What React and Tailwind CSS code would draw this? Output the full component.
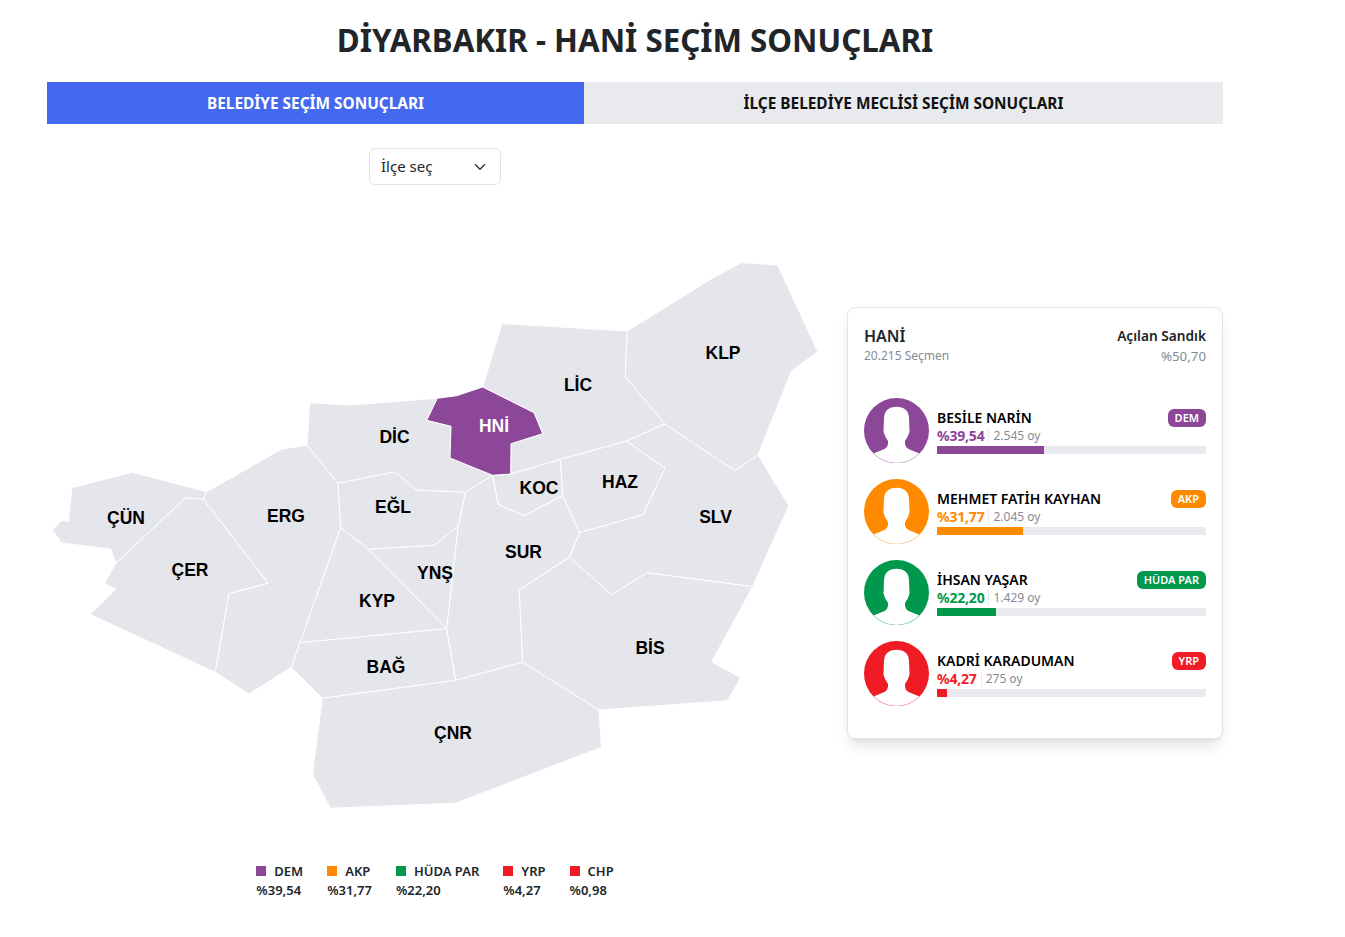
import React from 'react'

const districts = [
  ['ÇÜN', '206.7,491.7 132.3,472.3 72,487.7 68.3,521.7 62,520.3 52.3,530 61.7,543 110.7,549 116,563.3 185.3,498 203.3,499.3'],
  ['ÇER', '116,563.3 104.5,583.3 116,589.3 90,614.3 215.3,672.3 229,593.7 268.3,583.3 203.3,499.3 185.3,498'],
  ['ERG', '206.7,491.7 281.7,449 307,445.3 338,483.3 340.7,527.7 291.3,667.3 249,694 215.3,672.3 229,593.7 268.3,583.3 203.3,499.3'],
  ['DİC', '309.7,402.7 350,405 437.3,398.3 426.7,420.3 451,426.3 450,458 492.7,475.3 465.7,492.3 416.7,490 394.7,472 338,483.3 307,445.3'],
  ['EĞL', '338,483.3 394.7,472 416.7,490 465.7,492.3 458.3,526 434.3,545.3 368.3,549.3 340.7,527.7'],
  ['YNŞ', '368.3,549.3 434.3,545.3 458.3,526 446.7,628.7'],
  ['KYP', '340.7,527.7 368.3,549.3 446.7,628.7 300,642.7'],
  ['BAĞ', '300,642.7 446.7,628.7 455.7,680.3 322.3,698.3 291.3,667.3'],
  ['SUR', '465.7,492.3 492.7,475.3 498.3,504.3 524.3,515.7 562.7,495.3 579.7,532.7 569,557.3 519.3,590 522.7,662.3 455.7,680.3 446.7,628.7 458.3,526'],
  ['KOC', '492.7,475.3 510.7,474 560.3,459.3 562.7,495.3 524.3,515.7 498.3,504.3'],
  ['HAZ', '560.3,459.3 626.3,441 665,468.3 643,514.7 579.7,532.7 562.7,495.3'],
  ['LİC', '502,323.5 627.3,331 625.3,376.3 665,424 626.3,441 560.3,459.3 510.7,474 511,443.7 542.7,433.7 534,412.7 482.7,387'],
  ['KLP', '627.3,331 715,276.7 741.7,262.7 777.7,265 817.8,351.7 791.7,370.7 758,455 735,470.7 665,424 625.3,376.3'],
  ['SLV', '626.3,441 665,424 735,470.7 758,455 789,506 773.3,540 752.7,586.7 646.7,572.7 612,595 569.7,557.3 579.7,532.7 643,514.7 665,468.3'],
  ['BİS', '569.7,557.3 612,595 646.7,572.7 752.7,586.7 711.7,661.7 740.7,677.7 727.3,700.7 599,710 522.7,662.3 519.3,590'],
  ['ÇNR', '322.3,698.3 455.7,680.3 522.7,662.3 599,710 601.5,747.3 455.7,803.2 330.3,808.2 312.5,774.3'],
]

const hani = '437.3,398.3 456.7,395.7 482.7,387 534,412.7 542.7,433.7 511,443.7 510.7,474 492.7,475.3 450,458 451,426.3 426.7,420.3'

const labels = [
  ['ÇÜN', 126, 524], ['ÇER', 190, 576], ['ERG', 286, 522], ['DİC', 394.5, 443], ['EĞL', 393, 513],
  ['YNŞ', 435, 579], ['KYP', 377, 607], ['BAĞ', 386, 673], ['ÇNR', 453, 739], ['SUR', 523.5, 558],
  ['KOC', 539, 494], ['HAZ', 620, 488], ['SLV', 715.5, 523], ['KLP', 723, 359], ['LİC', 578, 391], ['BİS', 650, 654],
]

const candidates = [
  { name: 'BESİLE NARİN', party: 'DEM', pct: '%39,54', votes: '2.545 oy', bar: 107, color: '#8c4799' },
  { name: 'MEHMET FATİH KAYHAN', party: 'AKP', pct: '%31,77', votes: '2.045 oy', bar: 86, color: '#ff8a00' },
  { name: 'İHSAN YAŞAR', party: 'HÜDA PAR', pct: '%22,20', votes: '1.429 oy', bar: 59, color: '#00984d' },
  { name: 'KADRİ KARADUMAN', party: 'YRP', pct: '%4,27', votes: '275 oy', bar: 10, color: '#ef1c25' },
]

const legend = [
  ['DEM', '%39,54', 'bg-[#8c4799]'],
  ['AKP', '%31,77', 'bg-[#ff8a00]'],
  ['HÜDA PAR', '%22,20', 'bg-[#00984d]'],
  ['YRP', '%4,27', 'bg-[#ef1c25]'],
  ['CHP', '%0,98', 'bg-[#ef1c25]'],
]

function Avatar({ color }) {
  return (
    <svg width="65" height="65" viewBox="0 0 65 65" className="shrink-0">
      <circle cx="32.5" cy="32.5" r="32.5" fill={color} />
      <path
        d="M55.5 55.5 L44.5 51 Q41.5 49.5 41 46 L41 43 Q45 37 45.5 33 L45 20 Q44.5 9 32.5 8.7 Q20.5 9 20 20 L19.5 33 Q20 37 24 43 L24 46 Q23.5 49.5 20.5 51 L9.5 55.5 A32.5 32.5 0 0 0 55.5 55.5 Z"
        fill="#fff"
      />
      <path d="M9.5 55.5 A32.2 32.2 0 0 0 55.5 55.5" fill="none" stroke={color} strokeOpacity="0.3" />
    </svg>
  )
}

function Candidate({ c }) {
  return (
    <div className="flex gap-2 h-[65px] mb-4">
      <Avatar color={c.color} />
      <div className="flex-1 pt-[11px]">
        <div className="flex justify-between items-center h-[18px]">
          <span className="text-[14px] font-semibold text-black leading-none">{c.name}</span>
          <span className="text-[11px] font-semibold text-white rounded-md px-[7px] h-[18px] leading-[18px]" style={{ backgroundColor: c.color }}>{c.party}</span>
        </div>
        <div className="flex items-center h-[17px]">
          <span className="text-[14px] font-bold leading-none tracking-[-0.2px]" style={{ color: c.color }}>{c.pct}</span>
          <span className="w-px h-[16px] bg-[#e8eaed] mx-[4px]"></span>
          <span className="text-[12px] text-[#858b94] leading-none">{c.votes}</span>
        </div>
        <div className="h-2 bg-[#e8eaed] mt-[2px]">
          <div className="h-2" style={{ width: c.bar, backgroundColor: c.color }}></div>
        </div>
      </div>
    </div>
  )
}

function App() {
  return (
    <div className="w-[1345px] h-[937px] bg-white pl-[47px] font-['Noto_Sans',sans-serif] text-[#212529]">
      <div className="w-[1176px]">
        <h1 className="h-[82px] pt-[18px] text-center text-[31.3px] leading-[44px] font-bold">DİYARBAKIR - HANİ SEÇİM SONUÇLARI</h1>

        <div className="flex h-[42px] text-[15.4px] font-bold">
          <div className="w-[537px] flex items-center justify-center pt-[2px] bg-[#4469ef] text-white">BELEDİYE SEÇİM SONUÇLARI</div>
          <div className="w-[639px] flex items-center justify-center pt-[2px] bg-[#e9eaee] text-[#111]">İLÇE BELEDİYE MECLİSİ SEÇİM SONUÇLARI</div>
        </div>

        <div className="flex items-center justify-between">
          <div className="w-[776px] pt-6">
            <div className="w-[132px] h-[37px] mx-auto flex items-center justify-between pl-[11px] pr-[14px] border border-[#e2e3e8] rounded-md text-[15px]">
              <span>İlçe seç</span>
              <svg width="12" height="12" viewBox="0 0 16 16" fill="none" stroke="#343a40" strokeWidth="2" strokeLinecap="round" strokeLinejoin="round">
                <path d="m2 5 6 6 6-6" />
              </svg>
            </div>

            <svg width="776" height="665" viewBox="47 185 776 665" className="block">
              {districts.map(([id, pts]) => (
                <polygon key={id} points={pts} fill="#e5e6ec" stroke="#fff" strokeWidth="1" />
              ))}
              <polygon points={hani} fill="#8c4799" stroke="#fff" strokeWidth="1" />
              {labels.map(([t, x, y]) => (
                <text key={t} x={x} y={y} textAnchor="middle" fontFamily="'Liberation Sans', Arial, sans-serif" fontWeight="700" fontSize="17.5" fill="#000">{t}</text>
              ))}
              <text x="494" y="432" textAnchor="middle" fontFamily="'Liberation Sans', Arial, sans-serif" fontWeight="700" fontSize="17.5" fill="#fff">HNİ</text>
            </svg>

            <div className="flex justify-center gap-6 mt-[12px] text-[13px] font-semibold leading-[19px] h-[60px]">
              {legend.map(([name, pct, bg]) => (
                <div key={name}>
                  <div className="flex items-center gap-2">
                    <span className={`w-[10px] h-[10px] mt-[-2px] ${bg}`}></span>
                    <span>{name}</span>
                  </div>
                  <div>{pct}</div>
                </div>
              ))}
            </div>
          </div>

          <div className="w-[376px] h-[432px] bg-white border border-[#e3e4ea] rounded-lg shadow-lg px-4 pt-[17px]">
            <div className="flex justify-between h-[73px]">
              <div>
                <div className="text-[16px] font-semibold text-[#212529] leading-[22px]">HANİ</div>
                <div className="text-[12px] text-[#858b94] leading-[18px]">20.215 Seçmen</div>
              </div>
              <div className="text-right">
                <div className="text-[13.7px] font-semibold text-[#212529] leading-[22px]">Açılan Sandık</div>
                <div className="text-[13.3px] text-[#858b94] leading-[18px]">%50,70</div>
              </div>
            </div>
            {candidates.map(c => <Candidate key={c.name} c={c} />)}
          </div>
        </div>
      </div>
    </div>
  )
}

export default App
